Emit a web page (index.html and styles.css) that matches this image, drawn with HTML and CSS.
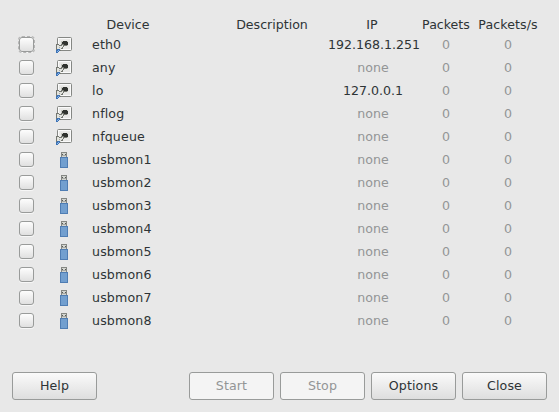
FILE: index.html
```html
<!DOCTYPE html>
<html lang="en">
<head>
<meta charset="utf-8">
<title>Capture Interfaces</title>
<link rel="stylesheet" href="styles.css">
</head>
<body>
<svg width="0" height="0" class="defs">
  <symbol id="eth" viewBox="0 0 17 17">
    <rect x="1.5" y="1.5" width="14" height="13" rx="1" fill="#e9e9e7" stroke="#858784"/>
    <rect x="2.5" y="2.5" width="12" height="11" fill="none" stroke="#fafafa"/>
    <path d="M5 5h7v5H5z" fill="#c6c8c1"/>
    <path d="M7 5h4v1h1v3H6V6h1z" fill="#30332f"/>
    <path d="M7 9h4v1H7z" fill="#777970"/>
    <path d="M0 8h3v1h2V8h3v3H7v2H5v2H1v-1H0z" fill="#747770"/>
    <path d="M1 9h2v1h3V9h1v2H6v1H5v2H1z" fill="#e1e2dd"/>
    <path d="M3 11h1v1H3z" fill="#a8aaa4"/>
    <path d="M0 17v-3h1v-1h3v2H3v1H2v1z" fill="#3c72b5"/>
    <path d="M1 15h1v1H1zM2 14h1v1H2z" fill="#8bb4e2"/>
  </symbol>
  <symbol id="usb" viewBox="0 0 17 17">
    <rect x="5.5" y="1.5" width="5" height="6" fill="#d3d5d0" stroke="#858783"/>
    <path d="M6 3h1v1H6zM9 3h1v1H9z" fill="#555855"/>
    <path d="M6 4h4v1H6z" fill="#a5a7a3"/>
    <rect x="4.5" y="6.5" width="7" height="10" fill="#729fcf" stroke="#4f7db3"/>
  </symbol>
</svg>
<main class="dialog">
  <div class="table" id="table">
    <div class="row head"><span></span><span></span><span class="device">Device</span><span>Description</span><span class="ip">IP</span><span>Packets</span><span class="rate">Packets/s</span></div>
  </div>
  <footer class="actions">
    <button class="help">Help</button>
    <button disabled>Start</button>
    <button disabled>Stop</button>
    <button>Options</button>
    <button>Close</button>
  </footer>
</main>
<script src="app.js"></script>
</body>
</html>
```
FILE: styles.css
```css
* { box-sizing: border-box; }
body { margin: 0; background: #e8e8e8; color: #2e3436; font: 12.6px "DejaVu Sans", sans-serif; }
.defs { position: absolute; }
.dialog { width: 559px; height: 412px; padding: 16px 0 12px; display: flex; flex-direction: column; justify-content: space-between; }
.row { display: grid; grid-template-columns: 37px 36px 124px 112px 90px 56px 68px; height: 23px; padding-left: 19px; align-items: center; text-align: center; white-space: nowrap; line-height: 17px; }
.head { height: 17px; }
.head .device { width: 72px; }
.head .ip { padding-right: 2px; }
.head .rate { letter-spacing: .1px; }
.name { text-align: left; letter-spacing: .15px; }
.muted { color: #939596; }
.check { width: 15px; height: 15px; border: 1px solid #999b9a; border-radius: 3px; background: linear-gradient(#fdfdfd, #e0e0e0); box-shadow: 0 1px #f7f7f7; }
.focus { outline: 1px dashed #b5b5b5; }
.icon { width: 17px; height: 17px; display: block; }
.actions { display: flex; gap: 6px; padding: 0 12px; }
button { width: 85px; height: 28px; padding: 0 0 1px; border: 1px solid #999b9a; border-radius: 3px; background: linear-gradient(#fafafa, #dedede); color: #2e3436; font: inherit; letter-spacing: .1px; }
button:disabled { background: #f4f4f4; color: #939596; }
.help { margin-right: 86px; }
```
FILE: app.js
```js
const devices = [
  ["eth0", "192.168.1.251"], ["any"], ["lo", "127.0.0.1"], ["nflog"], ["nfqueue"],
  ...Array.from({ length: 8 }, (_, i) => ["usbmon" + (i + 1)])
];
document.getElementById("table").insertAdjacentHTML("beforeend", devices.map(([name, ip], i) => `
  <div class="row">
    <span class="check${i === 0 ? " focus" : ""}"></span>
    <svg class="icon"><use href="#${name.startsWith("usb") ? "usb" : "eth"}"/></svg>
    <span class="name">${name}</span><span></span>
    <span class="ip${ip ? "" : " muted"}">${ip || "none"}</span>
    <span class="muted">0</span><span class="muted">0</span>
  </div>`).join(""));
```
